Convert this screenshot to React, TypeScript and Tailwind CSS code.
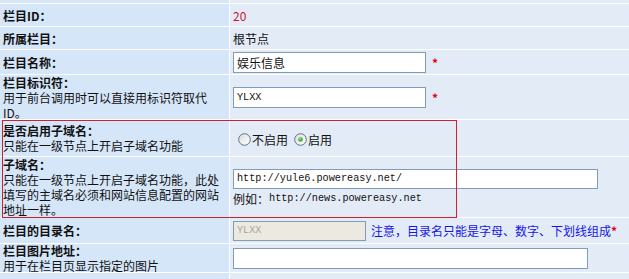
import React from "react";

const L = "w-[229px] shrink-0 bg-[#d6e6f9] flex flex-col justify-center pl-[3px]";
const R = "flex-1 bg-[#e3ebf7] flex items-center pl-[3px]";

function Radio({ checked }: { checked?: boolean }) {
  return (
    <svg width="13" height="13" viewBox="0 0 13 13" className="shrink-0">
      <defs>
        <linearGradient id={checked ? "rg1" : "rg0"} x1="0" y1="0" x2="1" y2="1">
          <stop offset="0" stopColor="#dcdcd6" />
          <stop offset="1" stopColor="#ffffff" />
        </linearGradient>
      </defs>
      <circle cx="6.5" cy="6.5" r="5.8" fill={`url(#${checked ? "rg1" : "rg0"})`} stroke="#5a7392" strokeWidth="1" />
      {checked && <circle cx="6.5" cy="6.5" r="2.3" fill="#3fae3a" />}
      {checked && <circle cx="6" cy="6" r="0.9" fill="#a6e39a" />}
    </svg>
  );
}

const inputBase = "border border-[#7f9db9] bg-white flex items-center pl-[3px] box-border";
const mono = "font-['Liberation_Mono',monospace] text-[10.2px]";

export default function App() {
  return (
    <div className="relative w-[629px] h-[279px] overflow-hidden bg-white font-['Noto_Sans_CJK_SC',sans-serif] text-[12px] leading-[15px] text-[#111]">
      <div className="flex flex-col gap-px">
        <div className="flex gap-px h-[3px]">
          <div className={L}></div>
          <div className={R}></div>
        </div>
        <div className="flex gap-px h-[22px]">
          <div className={L}><span className="font-bold">栏目ID：</span></div>
          <div className={R}><span className="text-[#cc1133]">20</span></div>
        </div>
        <div className="flex gap-px h-[22px]">
          <div className={L}><span className="font-bold">所属栏目：</span></div>
          <div className={R}><span>根节点</span></div>
        </div>
        <div className="flex gap-px h-[24px]">
          <div className={L}><span className="font-bold">栏目名称：</span></div>
          <div className={R}>
            <div className={`${inputBase} w-[193px] h-[21px]`}>娱乐信息</div>
            <span className="text-[#dd0022] ml-[6px] font-bold">*</span>
          </div>
        </div>
        <div className="flex gap-px h-[44px]">
          <div className={L}>
            <span className="font-bold">栏目标识符：</span>
            <span>用于前台调用时可以直接用标识符取代</span>
            <span>ID。</span>
          </div>
          <div className={R}>
            <div className={`${inputBase} w-[193px] h-[21px] ${mono}`}>YLXX</div>
            <span className="text-[#dd0022] ml-[6px] font-bold">*</span>
          </div>
        </div>
        <div className="flex gap-px h-[36px]">
          <div className={L}>
            <span className="font-bold">是否启用子域名：</span>
            <span>只能在一级节点上开启子域名功能</span>
          </div>
          <div className={R}>
            <div className="flex items-center ml-[5px] mt-[2px]">
              <Radio />
              <span className="ml-[1px]">不启用</span>
              <span className="ml-[6px]"></span>
              <Radio checked />
              <span className="ml-[1px]">启用</span>
            </div>
          </div>
        </div>
        <div className="flex gap-px h-[60px]">
          <div className={L}>
            <span className="font-bold">子域名：</span>
            <span>只能在一级节点上开启子域名功能，此处</span>
            <span>填写的主域名必须和网站信息配置的网站</span>
            <span>地址一样。</span>
          </div>
          <div className="flex-1 bg-[#e3ebf7] flex flex-col justify-center pl-[3px]">
            <div className={`${inputBase} w-[365px] h-[20px] ${mono}`}>http://yule6.powereasy.net/</div>
            <div className="flex items-center mt-[2px]">
              <span>例如：</span>
              <span className={mono}>http://news.powereasy.net</span>
            </div>
          </div>
        </div>
        <div className="flex gap-px h-[25px]">
          <div className={L}><span className="font-bold">栏目的目录名：</span></div>
          <div className={R}>
            <div className={`border border-[#7f9db9] bg-[#ebe9e0] flex items-center pl-[3px] box-border w-[133px] h-[20px] text-[#a7a69b] ${mono}`}>YLXX</div>
            <span className="ml-[5px] text-[#1515e6]">注意，目录名只能是字母、数字、下划线组成</span>
            <span className="text-[#dd0022] font-bold">*</span>
          </div>
        </div>
        <div className="flex gap-px h-[28px]">
          <div className={L}>
            <span className="font-bold">栏目图片地址：</span>
            <span>用于在栏目页显示指定的图片</span>
          </div>
          <div className={R}>
            <div className={`${inputBase} w-[355px] h-[21px]`}></div>
          </div>
        </div>
        <div className="flex gap-px h-[10px]">
          <div className={L}></div>
          <div className={R}></div>
        </div>
      </div>
      <div className="absolute left-[2px] top-[120px] w-[455px] h-[98px] border border-[#d0202e] pointer-events-none" />
    </div>
  );
}
